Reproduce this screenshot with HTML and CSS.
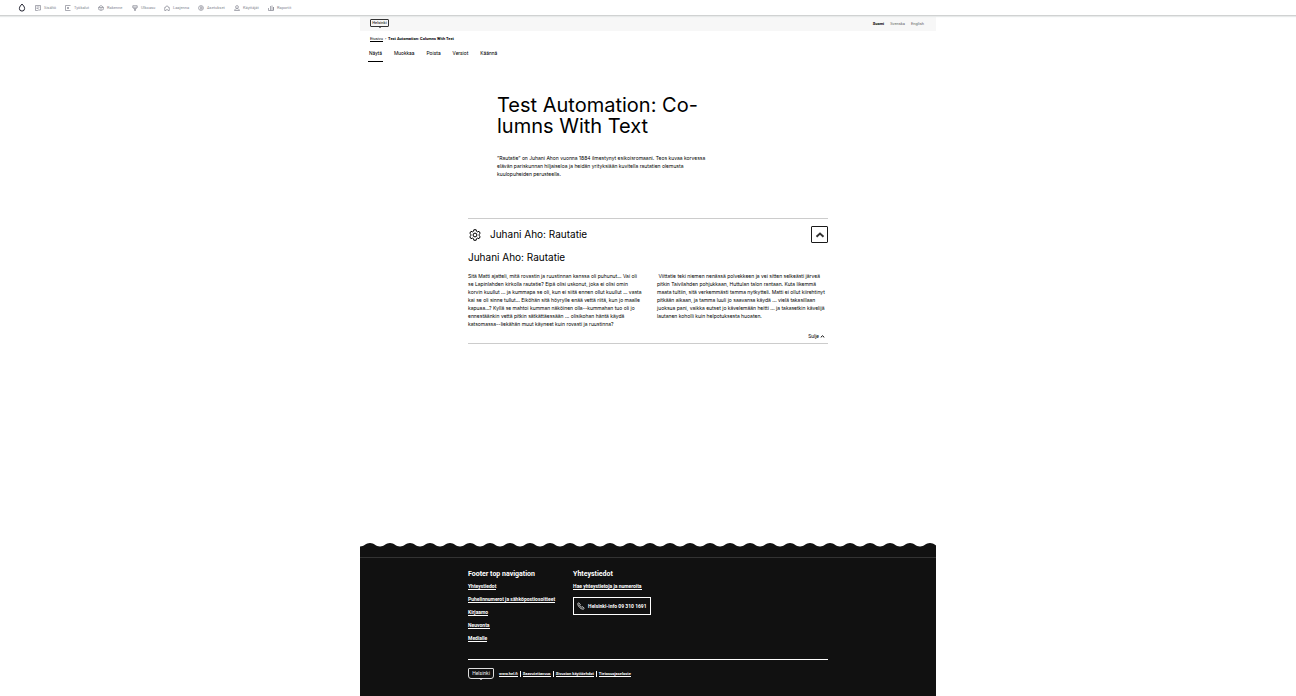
FILE: index.html
```html
<!DOCTYPE html>
<html lang="fi">
<head>
<meta charset="utf-8">
<meta name="viewport" content="width=device-width, initial-scale=1">
<title>Test Automation: Columns With Text</title>
<link rel="stylesheet" href="styles.css">
</head>
<body>
<nav class="toolbar" aria-label="Hallinta">
  <a class="drop" href="#" aria-label="Etusivu"><svg viewBox="0 0 8 9"><path d="M4 1C3 2.400 1.400 3.500 1.400 5.500a2.600 2.600 0 0 0 5.200 0C6.600 3.500 5 2.400 4 1z"/></svg></a>
  <a class="tool t1" href="#"><svg viewBox="0 0 6 6"><path d="M.5.5h5v4.500h-2l-1 .5H.5zM1.500 2h3M1.500 3.500h2"/></svg>Sisältö</a>
  <a class="tool t2" href="#"><svg viewBox="0 0 6 6"><path d="M5.500.5h-5v5h5M2 2l2 2M4 2L2 4"/></svg>Työkalut</a>
  <a class="tool t3" href="#"><svg viewBox="0 0 6 6"><path d="M.7 2L3 .5 5.300 2v2.500L3 5.500.7 4.500zM.7 2.500h4.600M2 4h2"/></svg>Rakenne</a>
  <a class="tool t4" href="#"><svg viewBox="0 0 6 6"><path d="M.8.7h4.400v2l-1 .9H1.800l-1-.9zM.8 2.200h4.400M2.500 3.700v1.800h1V3.700"/></svg>Ulkoasu</a>
  <a class="tool t5" href="#"><svg viewBox="0 0 6 6"><path d="M2 5.500H.7v-3h.8a1.500 1.500 0 1 1 3 0h.8v3H4a1 1 0 0 0-2 0z"/></svg>Laajenna</a>
  <a class="tool t6" href="#"><svg viewBox="0 0 6 6"><circle cx="3" cy="3" r="2.400"/><path d="M2 2h2M2 3h3M2 4h2"/></svg>Asetukset</a>
  <a class="tool t7" href="#"><svg viewBox="0 0 6 6"><circle cx="3" cy="2" r="1.400"/><path d="M.5 5.500c.3-2.500 4.700-2.500 5 0z"/></svg>Käyttäjät</a>
  <a class="tool t8" href="#"><svg viewBox="0 0 6 6"><path d="M.5 3v2.500h5V2M2.500 1v4.500M4 .5v5M5.500 2v3"/></svg>Raportit</a>
</nav>
<div class="page">
  <header class="header">
    <a class="logo" href="#">Helsinki<svg class="tip" viewBox="0 0 4 2"><path d="M0 0l2 1.500L4 0"/></svg></a>
    <nav class="languages" aria-label="Kieli"><a class="current" href="#">Suomi</a><a href="#">Svenska</a><a href="#">English</a></nav>
  </header>
  <nav class="crumbs" aria-label="Murupolku"><a href="#">Etusivu</a> <span>›</span> Test Automation: Columns With Text</nav>
  <nav class="tabs" aria-label="Välilehdet"><a class="active" href="#">Näytä</a><a href="#">Muokkaa</a><a href="#">Poista</a><a href="#">Versiot</a><a href="#">Käännä</a></nav>
  <main class="main">
    <div class="intro">
      <h1>Test Automation: Co-<br>lumns With Text</h1>
      <p>”Rautatie” on Juhani Ahon vuonna 1884 ilmestynyt esikoisromaani. Teos kuvaa korvessa<br>elävän pariskunnan hiljaiseloa ja heidän yrityksiään kuvitella rautatien olemusta<br>kuulopuheiden perusteella.</p>
    </div>
    <section class="accordion">
      <div class="accordion-head">
        <svg class="gear" viewBox="0 0 24 24"><path d="M9.700 1.500h4.600l.7 3.100 2 1.100 3.100-1 2.300 4-2.400 2.200v2.200l2.400 2.200-2.300 4-3.100-1-2 1.100-.7 3.100H9.700L9 19.400l-2-1.100-3.100 1-2.300-4L4 13.100v-2.200L1.600 8.700l2.300-4 3.100 1 2-1.100z"/><circle cx="12" cy="12" r="3.800"/></svg>
        <h2>Juhani Aho: Rautatie</h2>
        <button class="toggle" type="button" aria-label="Sulje"><svg viewBox="0 0 10 6"><path d="M1.500 4.800L5 1.600l3.500 3.200"/></svg></button>
      </div>
      <h3>Juhani Aho: Rautatie</h3>
      <div class="columns">
        <p>Sitä Matti ajatteli, mitä rovastin ja ruustinnan kanssa oli puhunut... Vai oli<br>se Lapinlahden kirkolla rautatie? Eipä olisi uskonut, joka ei olisi omin<br>korvin kuullut ... ja kummapa se oli, kun ei siitä ennen ollut kuullut ... vasta<br>kai se oli sinne tullut... Eiköhän sitä höyrylle enää vettä riitä, kun jo maalle<br>kapuaa...? Kyllä se mahtoi kumman näköinen olla--kummahan tuo oli jo<br>ennestäänkin vettä pitkin sätkättäessään ... olisikohan häntä käydä<br>katsomassa--liekähän muut käyneet kuin rovasti ja ruustinna?</p>
        <p>&nbsp;Viittatie teki niemen nenässä polvekkeen ja vei sitten selkeästi järveä<br>pitkin Taivilahden pohjukkaan, Huttulan talon rantaan. Kuta likemmä<br>maata tultiin, sitä verkemmästi tamma nytkytteli. Matti ei ollut kiirehtinyt<br>pitkään aikaan, ja tamma luuli jo saavansa käydä ... vielä takasillaan<br>juoksua pani, vaikka eutset jo kävelemään heitti ... ja takasetkin kävelijä<br>lautanen koholli kuin helpotuksesta huoaten.</p>
      </div>
      <button class="close" type="button">Sulje <svg viewBox="0 0 10 6"><path d="M1.500 4.800L5 1.600l3.500 3.200"/></svg></button>
    </section>
  </main>
  <footer class="footer">
    <svg class="wave" aria-hidden="true"><defs><pattern id="wave" width="20" height="5" patternUnits="userSpaceOnUse"><path d="M0 3.500C4 3.500 6 0 10 0s6 3.500 10 3.500V5H0z"/></pattern></defs><rect width="100%" height="5" fill="url(#wave)"/></svg>
    <div class="footer-body">
      <div class="footer-inner">
        <div class="footer-cols">
          <section><h2>Footer top navigation</h2>
            <ul><li><a href="#">Yhteystiedot</a></li><li><a href="#">Puhelinnumerot ja sähköpostiosoitteet</a></li><li><a href="#">Kirjaamo</a></li><li><a href="#">Neuvonta</a></li><li><a href="#">Medialle</a></li></ul>
          </section>
          <section><h2>Yhteystiedot</h2>
            <ul><li><a href="#">Hae yhteystietoja ja numeroita</a></li></ul>
            <a class="phone" href="#"><svg viewBox="0 0 8 8"><path d="M1.500.8L.8 1.800c0 2.500 3 5.400 5.400 5.400l1-.8-1.600-1.700-1 .6L2.700 3.400l.6-1z"/></svg>Helsinki-info 09 310 1691</a>
          </section>
        </div>
        <div class="bottom">
          <a class="logo light" href="#">Helsinki<svg class="tip" viewBox="0 0 4 2"><path d="M0 0l2 1.500L4 0"/></svg></a>
          <ul class="legal"><li><a href="#">www.hel.fi</a></li><li><a href="#">Saavutettavuus</a></li><li><a href="#">Sivuston käyttöehdot</a></li><li><a href="#">Tietosuojaseloste</a></li></ul>
        </div>
      </div>
    </div>
  </footer>
</div>
</body>
</html>
```
FILE: styles.css
```css
* { box-sizing: border-box; }
body { margin: 0; min-height: 100vh; display: flex; flex-direction: column; background: #fff; color: #000; font-family: Roboto, "Liberation Sans", sans-serif; font-size: 5px; line-height: 8px; }
a { color: inherit; text-decoration: none; }
h1, h2, h3, p, ul { margin: 0; padding: 0; font-weight: 400; }
ul { list-style: none; }
svg { display: block; flex: none; fill: none; stroke: currentColor; }
button { font: inherit; color: inherit; background: none; cursor: pointer; }

.toolbar { display: flex; align-items: center; height: 16px; padding-left: 18px; border-bottom: 1px solid #d0d2d2; box-shadow: 0 1px 1px #e8eaea; color: #868893; font-size: 4px; white-space: nowrap; z-index: 1; }
.drop { width: 17px; color: #222330; }
.drop svg { width: 8px; height: 9px; }
.tool { display: flex; align-items: center; gap: 3px; }
.tool svg { width: 6px; height: 6px; stroke-width: 0.7; }
.t1 { width: 30px; }
.t2 { width: 33px; }
.t3, .t7 { width: 34px; }
.t4 { width: 32px; }
.t5 { width: 34px; }
.t6 { width: 36px; }

.page { width: 100%; max-width: 576px; margin: 0 auto; flex: 1; display: flex; flex-direction: column; }
.header { height: 15px; padding: 0 12px 1px 10px; display: flex; align-items: center; justify-content: space-between; background: #f7f7f7; }
.logo { position: relative; width: 19px; height: 8px; border: 1px solid #333; border-radius: 1px; font-size: 4px; font-weight: 500; line-height: 6px; text-align: center; color: #333; }
.tip { position: absolute; left: 50%; top: 100%; width: 4px; height: 2px; margin-left: -2px; }
.languages { display: flex; gap: 6px; padding-top: 1px; font-size: 4px; color: #666; }
.languages .current { color: #000; font-weight: 700; }
.crumbs { padding: 4px 10px 3px; font-size: 4px; font-weight: 700; }
.crumbs a { font-weight: 400; border-bottom: 1px solid #000; }
.crumbs span { margin: 0 1px; }
.tabs { display: flex; gap: 10px; padding: 3px 8px 0; }
.tabs a { height: 13px; padding: 0 1px; }
.tabs .active { border-bottom: 1px solid #000; }

.main { flex: 1; width: 100%; max-width: 360px; margin: 0 auto; padding-bottom: 24px; font-family: Inter, "Liberation Sans", sans-serif; }
.intro { padding: 33px 29px 40px; }
h1 { font-size: 20px; line-height: 21px; }
.intro p { margin-top: 17px; }
.accordion { border-top: 1px solid #ccc; border-bottom: 1px solid #ccc; }
.accordion-head { display: flex; align-items: center; padding-top: 7px; }
.gear { width: 14px; height: 14px; padding: 1px; stroke-width: 2; }
.accordion h2, .accordion h3 { font-size: 10px; line-height: 14px; }
.accordion h2 { margin-left: 8px; padding-bottom: 2px; flex: 1; }
.accordion h3 { margin-top: 7px; }
.toggle { width: 17px; height: 17px; padding: 0; display: grid; place-items: center; border: 1px solid #1a1a1a; border-radius: 1px; color: #333; }
.toggle svg { width: 10px; height: 6px; stroke-width: 2; }
.columns { display: grid; grid-template-columns: repeat(2, minmax(0, 1fr)); gap: 18px; margin-top: 8px; white-space: nowrap; }
.close { display: flex; align-items: center; gap: 1px; margin: 4px 0 3px auto; padding: 0 3px 0 0; border: 0; font-family: Roboto, sans-serif; }
.close svg { width: 5px; height: 3px; stroke-width: 2; }

.wave { width: 100%; height: 5px; stroke: none; }
.wave path { fill: #111; }
.footer { color: #fff; font-weight: 700; }
.footer-body { margin-top: -1px; padding-top: 10px; background: #111; }
.footer-inner { border-top: 1px solid #333; padding: 11px max(8px, calc(50% - 180px)) 17px; }
.footer-cols { display: flex; gap: 18px; padding-bottom: 12px; border-bottom: 1px solid #fff; }
.footer h2 { font-size: 7px; line-height: 10px; font-weight: 700; margin-bottom: 3px; }
.footer ul { font-weight: 700; }
.footer li { height: 13px; }
.footer li a { border-bottom: 1px solid #fff; }
.phone { display: flex; align-items: center; gap: 3px; height: 18px; padding: 0 3px; border: 1px solid #fff; margin-top: 2px; }
.phone svg { width: 8px; height: 8px; stroke-width: 0.8; }
.bottom { display: flex; align-items: center; gap: 5px; padding-top: 8px; }
.light { width: 26px; height: 11px; border-color: #ddd; border-radius: 1px 1px 3px 3px; color: #eee; font-size: 5px; line-height: 9px; font-weight: 400; }
.legal { display: flex; font-size: 4px; line-height: 5px; }
.footer .legal li { height: 6px; }
.legal li + li { margin-left: 2px; padding-left: 2px; border-left: 1px solid #fff; }
```
